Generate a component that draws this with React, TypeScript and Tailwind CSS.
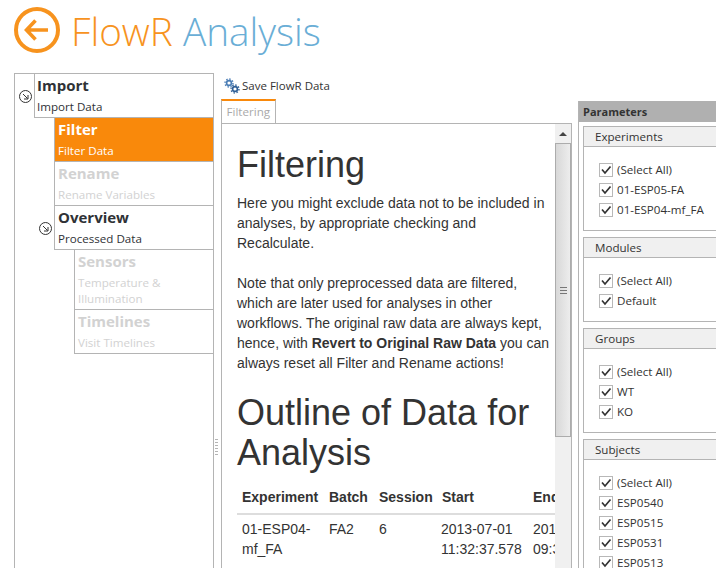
const segoe = { fontFamily: '"Open Sans", "Noto Sans", sans-serif' };

type NavItem = {
  title: string;
  sub: string[];
  box: string;
  state: 'normal' | 'active' | 'disabled';
  expander?: boolean;
};

const navItems: NavItem[] = [
  { title: 'Import', sub: ['Import Data'], box: 'ml-[19px] h-[44px] pl-[2px]', state: 'normal', expander: true },
  { title: 'Filter', sub: ['Filter Data'], box: 'ml-[39px] h-[44px] pl-[3px]', state: 'active' },
  { title: 'Rename', sub: ['Rename Variables'], box: 'ml-[39px] h-[44px] pl-[3px]', state: 'disabled' },
  { title: 'Overview', sub: ['Processed Data'], box: 'ml-[39px] h-[44px] pl-[3px]', state: 'normal', expander: true },
  { title: 'Sensors', sub: ['Temperature &', 'Illumination'], box: 'ml-[59px] h-[60px] pl-[3px]', state: 'disabled' },
  { title: 'Timelines', sub: ['Visit Timelines'], box: 'ml-[59px] h-[44px] pl-[3px]', state: 'disabled' },
];

const groups = [
  { name: 'Experiments', items: ['(Select All)', '01-ESP05-FA', '01-ESP04-mf_FA'] },
  { name: 'Modules', items: ['(Select All)', 'Default'] },
  { name: 'Groups', items: ['(Select All)', 'WT', 'KO'] },
  { name: 'Subjects', items: ['(Select All)', 'ESP0540', 'ESP0515', 'ESP0531', 'ESP0513', 'ESP0516'] },
];

function Expander() {
  return (
    <svg width="13" height="13" viewBox="0 0 13 13" className="absolute left-[-16px] top-[16px]">
      <circle cx="6.5" cy="6.5" r="6" fill="white" stroke="#333" strokeWidth="1" />
      <path d="M4 4 L8.5 8.5 M9 5 V9 H5" fill="none" stroke="#333" strokeWidth="1" />
    </svg>
  );
}

function Nav({ item }: { item: NavItem }) {
  const colors =
    item.state === 'active'
      ? 'bg-[#f9890b] text-white'
      : item.state === 'disabled'
        ? 'bg-white text-[#d2d2d2]'
        : 'bg-white text-[#2f3236]';
  return (
    <div className={`relative border-b border-l border-[#b4b4b4] pt-[1px] ${item.box} ${colors}`}>
      {item.expander && <Expander />}
      <div className="text-[15px] leading-[20px] font-bold">{item.title}</div>
      <div className="mt-[4px] text-[11.6px] leading-[16px]">
        {item.sub.map(s => (
          <div key={s}>{s}</div>
        ))}
      </div>
    </div>
  );
}

function Check({ label }: { label: string }) {
  return (
    <div className="flex h-[20px] items-center text-[11.6px] text-[#333]">
      <svg width="14" height="14" viewBox="0 0 14 14" className="mr-[4px] shrink-0">
        <rect x="0.5" y="0.5" width="13" height="13" fill="white" stroke="#b8b8b8" />
        <path d="M3 6.5 L6 10 L11.5 3.5" fill="none" stroke="#333" strokeWidth="1.7" />
      </svg>
      {label}
    </div>
  );
}

function GearIcon() {
  return (
    <svg width="16" height="16" viewBox="0 0 16 16" className="mr-[2px]">
      <circle cx="5" cy="5" r="2.4" fill="none" stroke="#4a7db5" strokeWidth="1.6" />
      <circle cx="5" cy="5" r="4" fill="none" stroke="#4a7db5" strokeWidth="1.4" strokeDasharray="1.5 1.6" />
      <circle cx="11" cy="11" r="2.4" fill="none" stroke="#2f5f96" strokeWidth="1.6" />
      <circle cx="11" cy="11" r="4" fill="none" stroke="#2f5f96" strokeWidth="1.4" strokeDasharray="1.5 1.6" />
    </svg>
  );
}

export default function App() {
  return (
    <div className="h-[568px] w-[716px] overflow-hidden bg-white" style={segoe}>
      <div className="flex h-[73px] items-start pl-[14px] pt-[7px]">
        <svg width="46" height="46" viewBox="0 0 46 46">
          <circle cx="23" cy="23" r="21" fill="none" stroke="#f7931e" strokeWidth="4" />
          <path d="M34 23 H13 M21.5 13.5 L12.5 23 L21.5 32.5" fill="none" stroke="#f7931e" strokeWidth="3.6" />
        </svg>
        <h1 className="ml-[11px] mt-[-3px] text-[38.7px] leading-[54px] font-light">
          <span className="text-[#f7931e]">FlowR</span> <span className="text-[#6aaed6]">Analysis</span>
        </h1>
      </div>

      <div className="flex h-[495px] items-start">
        <div className="ml-[14px] h-full w-[200px] shrink-0 border-x border-t border-[#b4b4b4]">
          {navItems.map(item => (
            <Nav key={item.title} item={item} />
          ))}
        </div>

        <div className="flex w-[7px] shrink-0 flex-col gap-[2px] pl-[1px] pt-[366px]">
          {[0, 1, 2, 3, 4, 5].map(i => (
            <div key={i} className="h-[1px] w-[3px] bg-[#b4b4b4]" />
          ))}
        </div>

        <div className="w-[351px] shrink-0">
          <div className="flex h-[26px] items-center pl-[3px] text-[11.5px] text-[#333]">
            <GearIcon />
            Save FlowR Data
          </div>
          <div className="flex">
            <div className="h-[24px] border-x border-t-2 border-[#b4b4b4] border-t-[#f9890b] px-[4.5px] text-[11.6px] leading-[21px] text-[#aaa]">
              Filtering
            </div>
          </div>
          <div className="flex h-[446px] border-x border-t border-[#b4b4b4]">
            <div
              className="w-[333px] shrink-0 overflow-hidden pl-[15px] text-[#333]"
              style={{ fontFamily: '"Liberation Sans", Arial, sans-serif' }}
            >
              <h2 className="mt-[21px] text-[36px] leading-[40px] font-normal">Filtering</h2>
              <p className="mt-[8px] w-[315px] text-[14px] leading-[20px]">
                Here you might exclude data not to be included in analyses, by appropriate checking and Recalculate.
              </p>
              <p className="mt-[20px] w-[315px] text-[14px] leading-[20px]">
                Note that only preprocessed data are filtered, which are later used for analyses in other workflows. The
                original raw data are always kept, hence, with <b>Revert to Original Raw Data</b> you can always reset all
                Filter and Rename actions!
              </p>
              <h2 className="mt-[20px] w-[315px] text-[36px] leading-[40px] font-normal">Outline of Data for Analysis</h2>
              <table className="mt-[7px] w-[400px] table-fixed text-[14px] leading-[20px]">
                <thead>
                  <tr className="border-b-2 border-[#ddd] text-left">
                    <th className="h-[34px] w-[87px] pl-[5px]">Experiment</th>
                    <th className="w-[50px] pl-[5px]">Batch</th>
                    <th className="w-[63px] pl-[5px]">Session</th>
                    <th className="w-[91px] pl-[5px]">Start</th>
                    <th className="w-[109px] pl-[5px]">End</th>
                  </tr>
                </thead>
                <tbody>
                  <tr className="align-top">
                    <td className="pl-[5px] pt-[4px]">01-ESP04-mf_FA</td>
                    <td className="pl-[5px] pt-[4px]">FA2</td>
                    <td className="pl-[5px] pt-[4px]">6</td>
                    <td className="pl-[4px] pt-[4px]">2013-07-01 11:32:37.578</td>
                    <td className="pl-[5px] pt-[4px]">2013-07-02 09:32:37.578</td>
                  </tr>
                </tbody>
              </table>
            </div>
            <div className="flex w-[16px] shrink-0 flex-col bg-[#f0f0f0]">
              <div className="flex h-[19px] items-center justify-center">
                <div className="h-0 w-0 border-x-[4px] border-b-[4px] border-x-transparent border-b-[#444]" />
              </div>
              <div className="flex h-[294px] flex-col items-center justify-center border border-[#acacac] bg-gradient-to-r from-[#d8d8d8] to-[#ededed]">
                <div className="h-[7px] w-[7px] border-y border-[#777] py-[2px]">
                  <div className="h-px w-full bg-[#777]" />
                </div>
              </div>
            </div>
          </div>
        </div>

        <div className="ml-[6px] mt-[28px] h-[467px] w-[138px] shrink-0 border-l border-[#b4b4b4]">
          <div className="h-[21px] bg-[#b0b0b0] pl-[4px] text-[11px] leading-[21px] font-bold text-[#333]">Parameters</div>
          <div className="flex flex-col gap-[6px] pl-[4px] pt-[4px]">
            {groups.map(g => (
              <div key={g.name} className="w-[150px] shrink-0 border border-[#b4b4b4]">
                <div className="h-[20px] border-b border-[#b4b4b4] bg-[#f0f0f0] pl-[11px] text-[11.6px] leading-[19px] text-[#333]">
                  {g.name}
                </div>
                <div className="pb-[10px] pl-[15px] pt-[13px]">
                  {g.items.map(i => (
                    <Check key={i} label={i} />
                  ))}
                </div>
              </div>
            ))}
          </div>
        </div>
      </div>
    </div>
  );
}
